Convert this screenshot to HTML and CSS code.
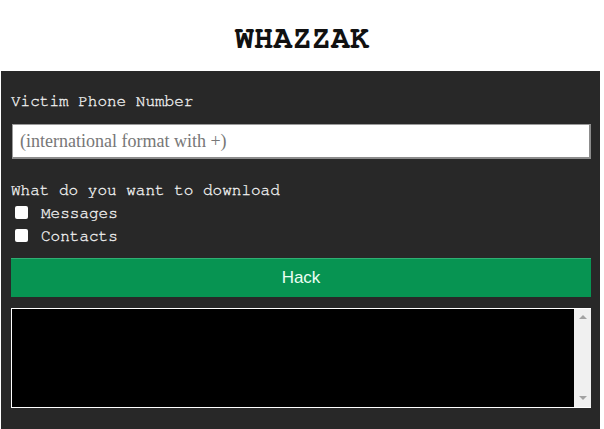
FILE: index.html
```html
<!DOCTYPE html>
<html>
<head>
<meta charset="utf-8">
<title>WHAZZAK</title>
<link rel="stylesheet" href="styles.css">
</head>
<body>
<header class="top">
  <h1 class="title">WHAZZAK</h1>
</header>
<main class="panel">
  <label class="label" for="phone">Victim Phone Number</label>
  <input class="phone" id="phone" type="text" placeholder="(international format with +)">
  <div class="label label-dl">What do you want to download</div>
  <label class="check"><input type="checkbox" class="box"><span>Messages</span></label>
  <label class="check"><input type="checkbox" class="box"><span>Contacts</span></label>
  <button class="hack" type="button">Hack</button>
  <div class="output">
    <div class="output-area"></div>
    <div class="scrollbar">
      <span class="arrow arrow-up"></span>
      <span class="arrow arrow-down"></span>
    </div>
  </div>
</main>
</body>
</html>
```
FILE: styles.css
```css
html, body {
  margin: 0;
  padding: 0;
  background: #ffffff;
}
body {
  font-family: "Nimbus Mono PS", "Nimbus Mono L", "FreeMono", "Courier 10 Pitch", "Courier New", "Liberation Mono", monospace;
}
.top {
  height: 71px;
  display: flex;
  justify-content: center;
  align-items: flex-start;
}
.title {
  margin: 20px 0 0;
  font-family: inherit;
  font-size: 32px;
  font-weight: bold;
  line-height: 36px;
  color: #111;
}
.panel {
  margin: 0 4px 0 1px;
  background: #282828;
  padding: 21px 9px 21px 10px;
  min-height: 358px;
  box-sizing: border-box;
  display: flex;
  flex-direction: column;
}
.label {
  display: block;
  color: #f2f2f2;
  font-size: 16px;
  line-height: 18px;
  -webkit-text-stroke: 0.3px #f2f2f2;
}
.phone {
  margin: 14px 0 0 1px;
  height: 35px;
  box-sizing: border-box;
  border-style: solid;
  border-width: 1px 2px 2px 1px;
  border-color: #9a9a9a #8c8c8c #8c8c8c #9a9a9a;
  background: #fff;
  padding: 0 7px;
  font-family: "Liberation Serif", "Times New Roman", serif;
  font-size: 18px;
  color: #333;
  outline: none;
}
.phone::placeholder {
  color: #777;
}
.label-dl {
  margin-top: 22px;
  margin-bottom: 2px;
}
.check {
  display: flex;
  align-items: center;
  height: 23px;
  color: #f2f2f2;
  font-size: 16px;
  -webkit-text-stroke: 0.3px #f2f2f2;
}
.box {
  appearance: none;
  -webkit-appearance: none;
  width: 13px;
  height: 13px;
  margin: 0 13px 0 4px;
  background: #fff;
  border-radius: 2px;
  border: none;
}
.hack {
  margin-top: 11px;
  height: 39px;
  border: none;
  border-top: 1px solid #2fae73;
  background: #079452;
  color: #eafff2;
  font-family: "Liberation Sans", Arial, sans-serif;
  font-size: 17px;
  cursor: pointer;
}
.output {
  margin-top: 11px;
  height: 100px;
  box-sizing: border-box;
  border: 1px solid #ffffff;
  border-right: none;
  display: flex;
}
.output-area {
  flex: 1;
  background: #000;
}
.scrollbar {
  width: 17px;
  background: #f0f0f0;
  position: relative;
}
.arrow {
  position: absolute;
  left: 5px;
  width: 0;
  height: 0;
  border-left: 4px solid transparent;
  border-right: 4px solid transparent;
}
.arrow-up {
  top: 6px;
  border-bottom: 4px solid #a3a3a3;
}
.arrow-down {
  bottom: 7px;
  border-top: 4px solid #a3a3a3;
}
```
